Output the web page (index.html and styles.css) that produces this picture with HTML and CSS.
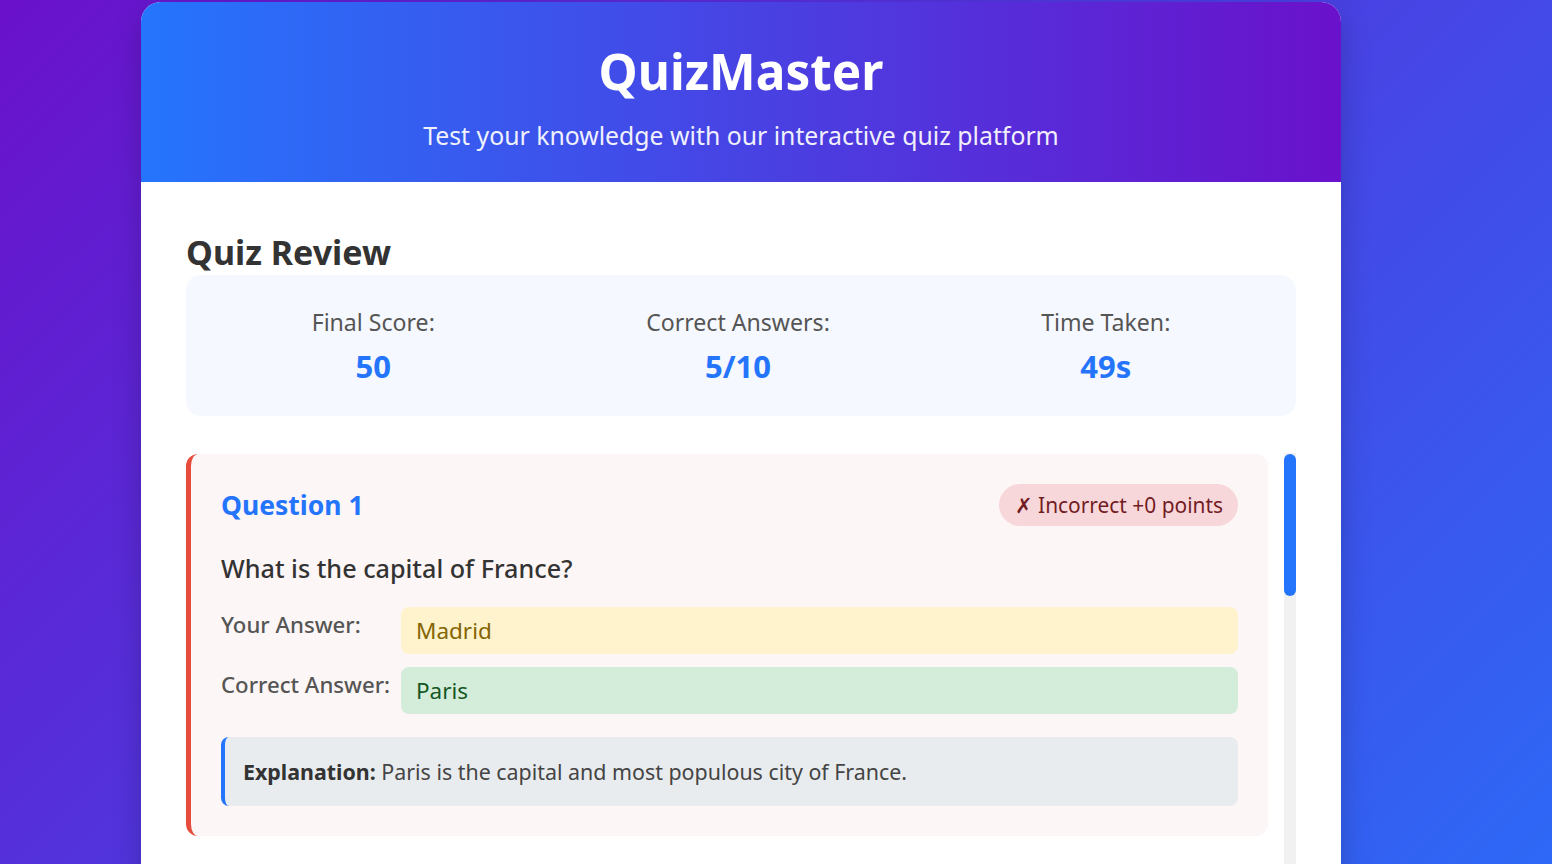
FILE: index.html
```html
<!DOCTYPE html>
<html lang="en">
<head>
<meta charset="utf-8">
<title>QuizMaster - Review</title>
<link rel="stylesheet" href="styles.css">
</head>
<body>
<div class="container">
  <header class="header">
    <h1 class="title">QuizMaster</h1>
    <p class="subtitle">Test your knowledge with our interactive quiz platform</p>
  </header>
  <main class="content">
    <h2 class="section-title">Quiz Review</h2>
    <div class="stats">
      <div class="stat"><div class="stat-label">Final Score:</div><div class="stat-value">50</div></div>
      <div class="stat"><div class="stat-label">Correct Answers:</div><div class="stat-value">5/10</div></div>
      <div class="stat"><div class="stat-label">Time Taken:</div><div class="stat-value">49s</div></div>
    </div>
    <div class="review">
      <div class="review-list">
        <div class="q-card incorrect">
          <div class="q-head">
            <h3 class="q-num">Question 1</h3>
            <span class="badge badge-wrong">✗ Incorrect +0 points</span>
          </div>
          <p class="q-text">What is the capital of France?</p>
          <div class="ans-row"><span class="ans-label">Your Answer:</span><div class="ans-box ans-user-wrong">Madrid</div></div>
          <div class="ans-row"><span class="ans-label">Correct Answer:</span><div class="ans-box ans-correct">Paris</div></div>
          <div class="explain"><strong>Explanation:</strong> Paris is the capital and most populous city of France.</div>
        </div>
        <div class="q-card correct">
          <div class="q-head">
            <h3 class="q-num">Question 2</h3>
            <span class="badge badge-right">✓ Correct +10 points</span>
          </div>
          <p class="q-text">Which planet is known as the Red Planet?</p>
          <div class="ans-row"><span class="ans-label">Your Answer:</span><div class="ans-box ans-correct">Mars</div></div>
          <div class="explain"><strong>Explanation:</strong> Mars appears red because of iron oxide on its surface.</div>
        </div>
        <div class="q-card incorrect">
          <div class="q-head">
            <h3 class="q-num">Question 3</h3>
            <span class="badge badge-wrong">✗ Incorrect +0 points</span>
          </div>
          <p class="q-text">What is the largest ocean on Earth?</p>
          <div class="ans-row"><span class="ans-label">Your Answer:</span><div class="ans-box ans-user-wrong">Atlantic Ocean</div></div>
          <div class="ans-row"><span class="ans-label">Correct Answer:</span><div class="ans-box ans-correct">Pacific Ocean</div></div>
          <div class="explain"><strong>Explanation:</strong> The Pacific Ocean covers about a third of the Earth's surface.</div>
        </div>
      </div>
      <div class="scrollbar" aria-hidden="true"><div class="scrollbar-thumb"></div></div>
    </div>
  </main>
</div>
</body>
</html>
```
FILE: styles.css
```css
* { box-sizing: border-box; }

html, body { margin: 0; padding: 0; }

body {
  font-family: "Noto Sans", "Open Sans", "DejaVu Sans", sans-serif;
  background: linear-gradient(135deg, #6a11cb 0%, #2575fc 100%);
  min-height: 100vh;
  padding: 2px 70px 20px 0;
  color: #333;
}

.container {
  width: 1200px;
  margin: 0 auto;
  background: #fff;
  border-radius: 20px;
  overflow: hidden;
  box-shadow: 0 10px 30px rgba(0, 0, 0, 0.2);
}

.header {
  background: linear-gradient(90deg, #2575fc 0%, #6a11cb 100%);
  color: #fff;
  text-align: center;
  padding: 39px 20px 0;
  height: 180px;
}

.title {
  margin: 0;
  font-size: 49.5px;
  line-height: 60px;
  font-weight: 700;
}

.subtitle {
  margin: 17px 0 0;
  font-size: 24.8px;
  line-height: 34px;
  opacity: 0.92;
}

.content {
  padding: 48px 45px 45px;
}

.section-title {
  margin: 0;
  font-size: 34px;
  line-height: 45px;
  font-weight: 700;
  color: #333;
}

.stats {
  display: flex;
  justify-content: space-around;
  background: #f5f8fe;
  border-radius: 15px;
  padding: 32px 20px 30px;
  margin-bottom: 37px;
}

.stat {
  text-align: center;
}

.stat-label {
  font-size: 23.1px;
  line-height: 30px;
  color: #555;
}

.stat-value {
  margin-top: 9px;
  font-size: 31px;
  line-height: 40px;
  font-weight: 700;
  color: #2575fc;
}

.review {
  display: flex;
  gap: 16px;
  height: 700px;
}

.review-list {
  flex: 1;
  overflow: hidden;
  padding-top: 1px;
}

.scrollbar {
  flex: 0 0 12px;
  background: #f1f1f1;
  padding-top: 1px;
}

.scrollbar-thumb {
  height: 142px;
  background: #2575fc;
  border-radius: 6px;
}

.q-card {
  background: #fdf6f6;
  border-left: 5px solid #e74c3c;
  border-radius: 12px;
  padding: 30px;
  margin-bottom: 30px;
}

.q-card.correct {
  background: #f5fbf6;
  border-left-color: #28a745;
}

.q-head {
  display: flex;
  justify-content: space-between;
  align-items: center;
}

.q-num {
  margin: 0;
  font-size: 26.5px;
  line-height: 36px;
  font-weight: 700;
  color: #2575fc;
}

.badge {
  display: inline-block;
  padding: 6px 15px 6px 16px;
  border-radius: 21px;
  font-size: 20.9px;
  line-height: 30px;
  font-weight: 400;
}

.badge-wrong { background: #f8d7da; color: #721c24; }
.badge-right { background: #d4edda; color: #155724; }

.q-text {
  margin: 24px 0 21px;
  font-size: 25.2px;
  line-height: 36px;
  font-weight: 500;
  color: #333;
}

.ans-row {
  display: flex;
  align-items: flex-start;
  margin-bottom: 13px;
}

.ans-label {
  flex: 0 0 180px;
  font-size: 22.2px;
  line-height: 35px;
  font-weight: 500;
  color: #555;
}

.ans-box {
  flex: 1;
  padding: 8px 15px;
  border-radius: 8px;
  font-size: 22.5px;
  line-height: 31px;
}

.ans-user-wrong { background: #fff3cd; color: #856404; }
.ans-correct { background: #d4edda; color: #155724; }

.explain {
  margin-top: 23px;
  background: #e9ecef;
  border-left: 4px solid #2575fc;
  border-radius: 8px;
  padding: 19px 18px;
  font-size: 21.4px;
  line-height: 31px;
  color: #444;
}

.explain strong {
  color: #333;
  font-weight: 700;
}
```
